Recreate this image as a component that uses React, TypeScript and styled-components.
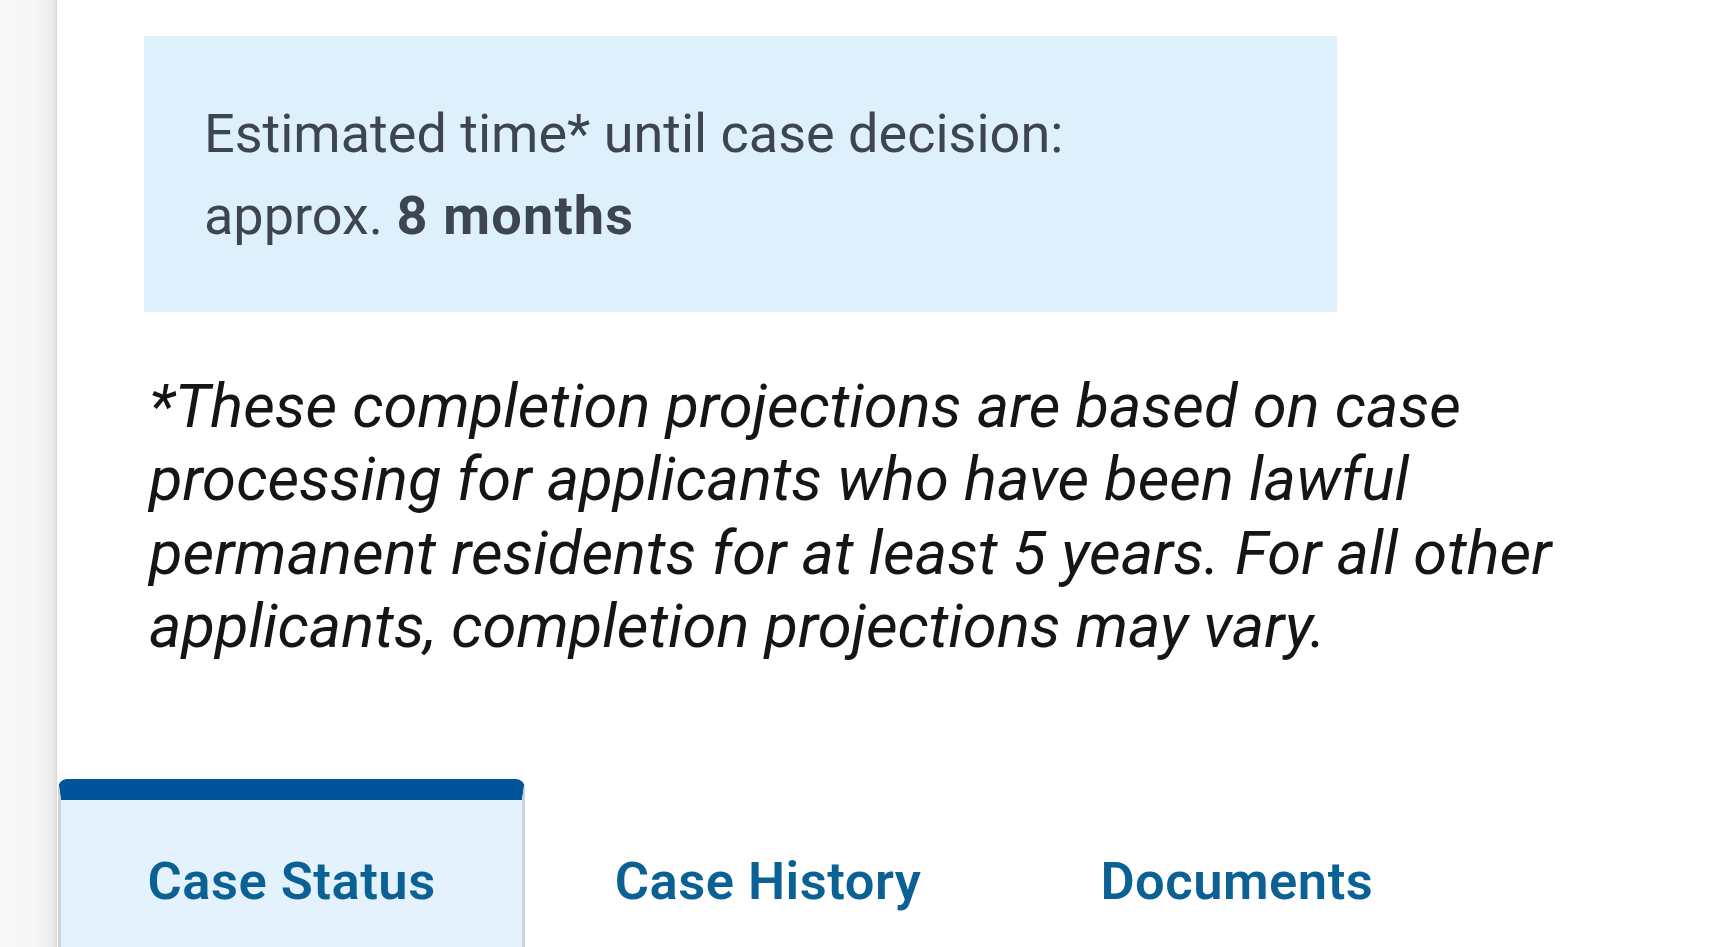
import React from "react";
import styled, { createGlobalStyle } from "styled-components";

const GlobalStyle = createGlobalStyle`
  html, body {
    margin: 0;
    padding: 0;
    background: #ffffff;
    overflow: hidden;
    font-family: Roboto, "Liberation Sans", Arial, sans-serif;
  }
  * { box-sizing: border-box; }
`;

const Page = styled.div`
  display: flex;
  width: 1723px;
  height: 947px;
  overflow: hidden;
`;

const Gutter = styled.div`
  flex: 0 0 57px;
  background: linear-gradient(to right, #f8f8f8 0%, #f6f6f6 65%, #ececec 92%, #e2e2e2 100%);
  border-right: 1px solid #d9d9d9;
`;

const Panel = styled.main`
  flex: 1;
  display: flex;
  flex-direction: column;
  background: #ffffff;
`;

const Content = styled.section`
  padding: 36px 60px 0 87px;
`;

const EstimateBox = styled.div`
  width: 1193px;
  background: #dff0fd;
  padding: 57px 60px 55px 60px;
  color: #3d4551;
  font-size: 54px;
  line-height: 82px;
  font-weight: 400;
`;

const Strong = styled.strong`
  font-weight: 700;
  letter-spacing: 1.2px;
`;

const Footnote = styled.p`
  margin: 58px 0 0 5px;
  font-style: italic;
  font-size: 61.5px;
  line-height: 73.3px;
  color: #151515;
  font-weight: 400;
`;

const Tabs = styled.nav`
  display: flex;
  align-items: flex-start;
  margin-top: 116px;
  padding-left: 1px;
`;

const Tab = styled.div<{ $active?: boolean }>`
  padding: 50px 86.5px 60px;
  border-top: 21px solid ${(p) => (p.$active ? "#00549a" : "transparent")};
  border-left: 3px solid ${(p) => (p.$active ? "#cdd3d8" : "transparent")};
  border-right: 3px solid ${(p) => (p.$active ? "#cdd3d8" : "transparent")};
  border-radius: 9px 9px 0 0;
  background: ${(p) => (p.$active ? "#e3f2fc" : "transparent")};
  color: #0b6194;
  font-size: 52.5px;
  letter-spacing: 0.5px;
  font-weight: 600;
  line-height: 1.2;
  white-space: nowrap;
  min-height: 240px;
`;

export default function App() {
  return (
    <>
      <GlobalStyle />
      <Page>
        <Gutter />
        <Panel>
          <Content>
            <EstimateBox>
              Estimated time* until case decision:
              <br />
              approx. <Strong>8 months</Strong>
            </EstimateBox>
            <Footnote>
              *These completion projections are based on case processing for
              applicants who have been lawful permanent residents for at least 5
              years. For all other applicants, completion projections may vary.
            </Footnote>
          </Content>
          <Tabs>
            <Tab $active>Case Status</Tab>
            <Tab>Case History</Tab>
            <Tab>Documents</Tab>
          </Tabs>
        </Panel>
      </Page>
    </>
  );
}
